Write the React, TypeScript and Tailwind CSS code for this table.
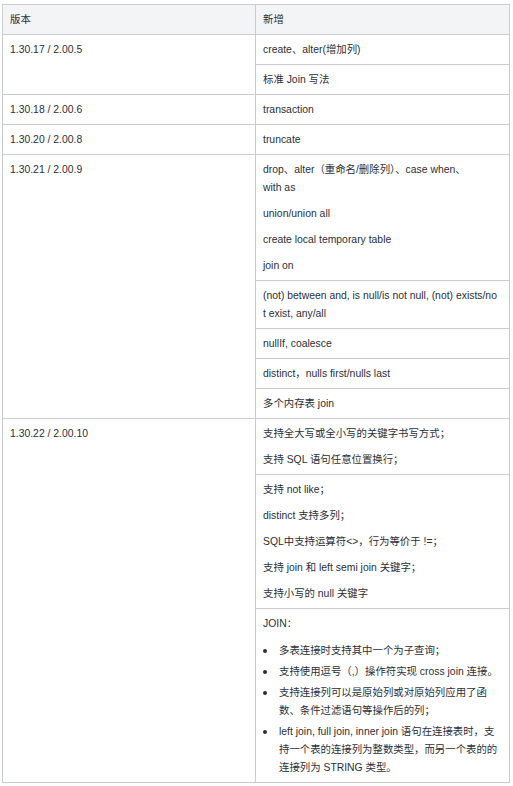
import React from 'react';

type Cell = React.ReactNode;

const font = "font-['Liberation_Sans','Noto_Sans_CJK_SC',sans-serif]";

function Paras({ items }: { items: Cell[] }) {
    return (
        <div className="flex flex-col gap-[8px]">
            {items.map((t, i) => (
                <p key={i}>{t}</p>
            ))}
        </div>
    );
}

function Bullet({ children }: { children: Cell }) {
    return (
        <li className="flex">
            <span className="w-[4px] shrink-0 pt-[7px]">
                <span className="block w-[4px] h-[4px] rounded-full bg-[#2b2f3a]" />
            </span>
            <span className="pl-[12px]">{children}</span>
        </li>
    );
}

const td = 'border border-[#c9ccd3] px-[7px] pt-[6px] pb-[5px] align-top';

export default function App() {
    return (
        <div className={`bg-white min-h-[786px] pl-[2px] pt-[4px] ${font} text-[10.4px] leading-[18px] text-[#2b2f3a]`}>
            <table className="table-fixed border-collapse w-[507px]">
                <colgroup>
                    <col className="w-[253px]" />
                    <col className="w-[254px]" />
                </colgroup>
                <thead>
                    <tr className="bg-[#f3f4f6]">
                        <th className={`${td} text-left font-normal`}>版本</th>
                        <th className={`${td} text-left font-normal`}>新增</th>
                    </tr>
                </thead>
                <tbody>
                    {/* 1.30.17 */}
                    <tr>
                        <td className={td} rowSpan={2}>1.30.17 / 2.00.5</td>
                        <td className={td}>create、alter(增加列)</td>
                    </tr>
                    <tr>
                        <td className={td}>标准 Join 写法</td>
                    </tr>
                    <tr>
                        <td className={td}>1.30.18 / 2.00.6</td>
                        <td className={td}>transaction</td>
                    </tr>
                    <tr>
                        <td className={td}>1.30.20 / 2.00.8</td>
                        <td className={td}>truncate</td>
                    </tr>

                    {/* 1.30.21 */}
                    <tr>
                        <td className={td} rowSpan={5}>1.30.21 / 2.00.9</td>
                        <td className={td}>
                            <Paras
                                items={[
                                    <>drop、alter（重命名/删除列）、case when、<br />with as</>,
                                    'union/union all',
                                    'create local temporary table',
                                    'join on',
                                ]}
                            />
                        </td>
                    </tr>
                    <tr>
                        <td className={td}>
                            <span className="whitespace-nowrap">(not) between and, is null/is not null, (not) exists/no</span>
                            <br />t exist, any/all
                        </td>
                    </tr>
                    <tr>
                        <td className={td}>nullIf, coalesce</td>
                    </tr>
                    <tr>
                        <td className={td}>distinct，nulls first/nulls last</td>
                    </tr>
                    <tr>
                        <td className={td}>多个内存表 join</td>
                    </tr>

                    {/* 1.30.22 */}
                    <tr>
                        <td className={td} rowSpan={3}>1.30.22 / 2.00.10</td>
                        <td className={td}>
                            <Paras items={['支持全大写或全小写的关键字书写方式；', '支持 SQL 语句任意位置换行；']} />
                        </td>
                    </tr>
                    <tr>
                        <td className={td}>
                            <Paras
                                items={[
                                    '支持 not like；',
                                    'distinct 支持多列；',
                                    'SQL中支持运算符<>，行为等价于 !=；',
                                    '支持 join 和 left semi join 关键字；',
                                    '支持小写的 null 关键字',
                                ]}
                            />
                        </td>
                    </tr>
                    <tr>
                        <td className={td}>
                            <p>JOIN：</p>
                            <ul className="mt-[9px] flex flex-col gap-[3px]">
                                <Bullet>多表连接时支持其中一个为子查询；</Bullet>
                                <Bullet>支持使用逗号（,）操作符实现 cross join 连接。</Bullet>
                                <Bullet>
                                    支持连接列可以是原始列或对原始列应用了函<br />数、条件过滤语句等操作后的列；
                                </Bullet>
                                <Bullet>
                                    left join, full join, inner join 语句在连接表时，支<br />持一个表的连接列为整数类型，而另一个表的的<br />连接列为 STRING 类型。
                                </Bullet>
                            </ul>
                        </td>
                    </tr>
                </tbody>
            </table>
        </div>
    );
}
